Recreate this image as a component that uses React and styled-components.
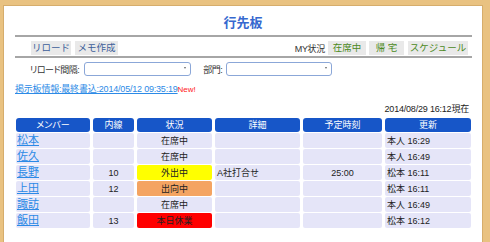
import React from "react";
import styled, { createGlobalStyle } from "styled-components";

const Global = createGlobalStyle`
  html, body { margin: 0; padding: 0; }
  body {
    background: #e9c281;
    font-family: "Liberation Sans", "Noto Sans CJK JP", sans-serif;
    font-size: 9px;
    color: #222;
    font-feature-settings: "palt";
  }
`;

const Frame = styled.div`
  padding: 5px 0 0 3px;
  width: 481px;
  height: 237px;
  overflow: hidden;
`;

const Panel = styled.div`
  background: #fff;
  border: 1px solid #d6ad6c;
  box-sizing: border-box;
  width: 480px;
  height: 260px;
  padding: 0 11px;
`;

const Title = styled.h1`
  margin: 0;
  padding-top: 9px;
  height: 20px;
  line-height: 16px;
  text-align: center;
  font-size: 13px;
  font-weight: bold;
  color: #3668cf;
`;

const Toolbar = styled.div`
  display: flex;
  align-items: center;
  border-top: 2px solid #a6a6a6;
  border-bottom: 2px solid #a6a6a6;
  padding: 4px 4px 1px 16px;
  width: 457px;
  box-sizing: border-box;
`;

const ToolButton = styled.button`
  width: ${(p) => p.$w}px;
  height: 14px;
  padding: 0;
  margin-left: ${(p) => p.$ml || 0}px;
  border: none;
  background: #e9e9e9;
  font-family: inherit;
  font-size: 9.5px;
  line-height: 14px;
  text-align: center;
  white-space: nowrap;
  color: ${(p) => (p.$green ? "#4b8a23" : "#3d5f9a")};
  cursor: pointer;
`;

const Spacer = styled.div`
  flex: 1;
`;

const MyLabel = styled.span`
  font-size: 9px;
  color: #333;
  letter-spacing: -0.3px;
`;

const FilterRow = styled.div`
  display: flex;
  align-items: center;
  margin-top: 4px;
  padding-left: 15px;
  height: 14px;
`;

const FieldLabel = styled.label`
  font-size: 9px;
  letter-spacing: -0.5px;
  color: #333;
  margin-right: ${(p) => p.$mr}px;
  margin-left: ${(p) => p.$ml || 0}px;
`;

const SelectWrap = styled.div`
  position: relative;
  width: ${(p) => p.$w}px;
  height: 14px;
`;

const Select = styled.select`
  appearance: none;
  width: 100%;
  height: 14px;
  box-sizing: border-box;
  border: 1px solid #8ba7d8;
  border-radius: 3px;
  background: #fff;
  font-size: 9px;
  padding: 0 10px 0 3px;
`;

const Arrow = styled.span`
  position: absolute;
  right: 5px;
  top: 5px;
  width: 0;
  height: 0;
  border-left: 1.5px solid transparent;
  border-right: 1.5px solid transparent;
  border-top: 2px solid #666;
  pointer-events: none;
`;

const InfoLine = styled.div`
  margin-top: 7px;
  height: 12px;
  line-height: 12px;
  font-size: 9px;
  white-space: nowrap;
`;

const InfoLink = styled.a`
  color: #2c8ae6;
  text-decoration: underline;
  letter-spacing: -0.2px;
`;

const NewMark = styled.span`
  color: #f22;
  font-size: 8px;
`;

const Stamp = styled.div`
  margin-top: 8px;
  height: 12px;
  line-height: 12px;
  text-align: right;
  padding-right: 2px;
  font-size: 9px;
  letter-spacing: -0.2px;
  color: #222;
`;

const Table = styled.table`
  margin: 2px -3px 0 -2px;
  border-collapse: separate;
  border-spacing: 3px 1px;
  table-layout: fixed;
  width: 461px;
`;

const Th = styled.th`
  width: ${(p) => p.$w}px;
  height: 14px;
  padding: 0;
  background: #1756c8;
  color: #fff;
  font-weight: normal;
  font-size: 9px;
  line-height: 14px;
  border-radius: 3px;
  text-align: center;
`;

const statusBg = {
  "外出中": "#ffff00",
  "出向中": "#f4a462",
  "本日休業": "#ff0000",
};

const Td = styled.td`
  height: 14px;
  padding: 0 ${(p) => (p.$align === "left" ? 2 : 0)}px;
  background: ${(p) => p.$bg || "#e5e5f8"};
  border-radius: 2px;
  font-size: 9px;
  line-height: 14px;
  text-align: ${(p) => p.$align || "center"};
  white-space: nowrap;
  overflow: hidden;
`;

const NameLink = styled.a`
  font-size: 11px;
  color: #2c8ae6;
  text-decoration: underline;
  margin-left: -1px;
`;

const rows = [
  { name: "松本", ext: "", status: "在席中", detail: "", time: "", upd: "本人 16:29" },
  { name: "佐久", ext: "", status: "在席中", detail: "", time: "", upd: "本人 16:49" },
  { name: "長野", ext: "10", status: "外出中", detail: "A社打合せ", time: "25:00", upd: "松本 16:11" },
  { name: "上田", ext: "12", status: "出向中", detail: "", time: "", upd: "松本 16:11" },
  { name: "諏訪", ext: "", status: "在席中", detail: "", time: "", upd: "本人 16:49" },
  { name: "飯田", ext: "13", status: "本日休業", detail: "", time: "", upd: "松本 16:12" },
];

export default function App() {
  return (
    <>
      <Global />
      <Frame>
        <Panel>
          <Title>行先板</Title>
          <Toolbar>
            <ToolButton $w={40}>リロード</ToolButton>
            <ToolButton $w={43} $ml={4}>メモ作成</ToolButton>
            <Spacer />
            <MyLabel>MY状況</MyLabel>
            <ToolButton $green $w={38} $ml={3}>在席中</ToolButton>
            <ToolButton $green $w={35} $ml={3}>帰 宅</ToolButton>
            <ToolButton $green $w={60} $ml={4}>スケジュール</ToolButton>
          </Toolbar>
          <FilterRow>
            <FieldLabel $mr={5}>リロード間隔:</FieldLabel>
            <SelectWrap $w={107}>
              <Select defaultValue="">
                <option value=""></option>
              </Select>
              <Arrow />
            </SelectWrap>
            <FieldLabel $ml={12} $mr={4}>部門:</FieldLabel>
            <SelectWrap $w={106}>
              <Select defaultValue="">
                <option value=""></option>
              </Select>
              <Arrow />
            </SelectWrap>
          </FilterRow>
          <InfoLine>
            <InfoLink href="#">掲示板情報:最終書込:2014/05/12 09:35:19</InfoLink>
            <NewMark>New!</NewMark>
          </InfoLine>
          <Stamp>2014/08/29 16:12現在</Stamp>
          <Table>
            <thead>
              <tr>
                <Th $w={74}>メンバー</Th>
                <Th $w={41}>内線</Th>
                <Th $w={75}>状況</Th>
                <Th $w={85}>詳細</Th>
                <Th $w={79}>予定時刻</Th>
                <Th $w={86}>更新</Th>
              </tr>
            </thead>
            <tbody>
              {rows.map((r) => (
                <tr key={r.name}>
                  <Td $align="left">
                    <NameLink href="#">{r.name}</NameLink>
                  </Td>
                  <Td>{r.ext}</Td>
                  <Td $bg={statusBg[r.status]}>{r.status}</Td>
                  <Td $align="left">{r.detail}</Td>
                  <Td>{r.time}</Td>
                  <Td $align="left">{r.upd}</Td>
                </tr>
              ))}
            </tbody>
          </Table>
        </Panel>
      </Frame>
    </>
  );
}
